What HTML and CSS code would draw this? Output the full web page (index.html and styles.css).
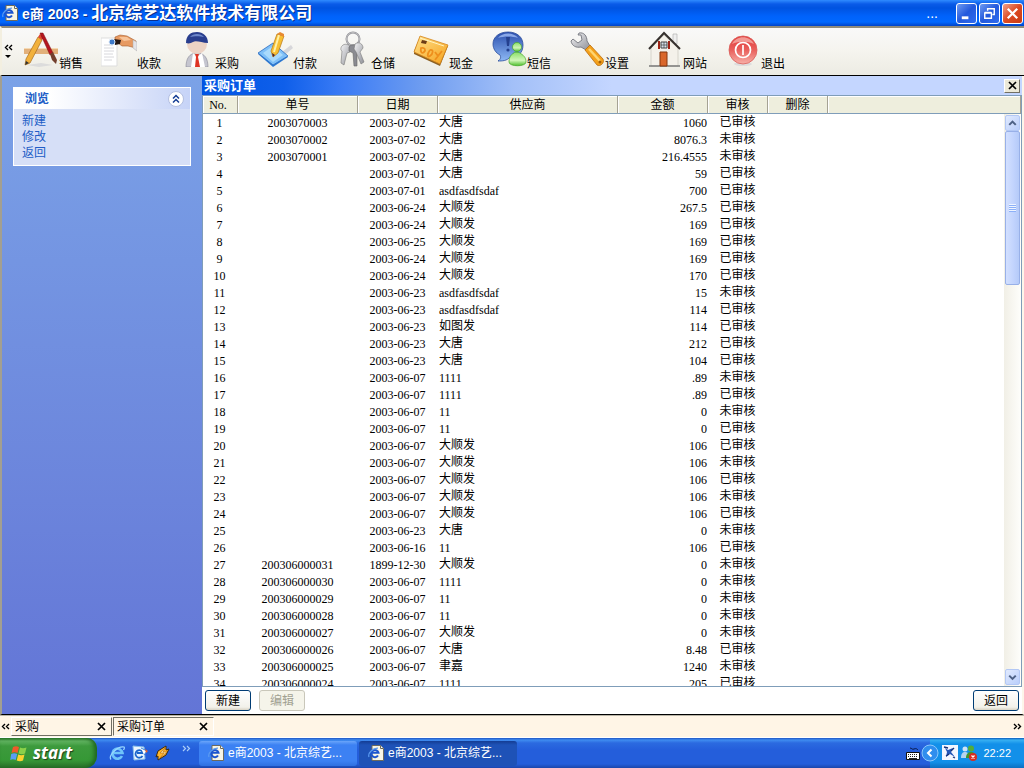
FILE: index.html
```html
<!DOCTYPE html>
<html lang="zh-CN">
<head>
<meta charset="utf-8">
<title>e商2003 - 北京综艺达软件技术有限公司</title>
<link rel="stylesheet" href="styles.css">
</head>
<body>
<svg class="defs" aria-hidden="true">
  <defs>
    <linearGradient id="blueG" x1="0" y1="0" x2="0" y2="1"><stop offset="0" stop-color="#2b4fae"/><stop offset="1" stop-color="#8db8f4"/></linearGradient>
    <linearGradient id="goldG" x1="0" y1="0" x2="1" y2="1"><stop offset="0" stop-color="#ffe08a"/><stop offset="1" stop-color="#f5a21c"/></linearGradient>
    <linearGradient id="redG" x1="0" y1="0" x2="0" y2="1"><stop offset="0" stop-color="#e23b3b"/><stop offset=".5" stop-color="#e9605c"/><stop offset="1" stop-color="#f7b0a8"/></linearGradient>
    <linearGradient id="greenG" x1="0" y1="0" x2="0" y2="1"><stop offset="0" stop-color="#8be06a"/><stop offset=".6" stop-color="#d0f5b8"/><stop offset="1" stop-color="#4dbf2c"/></linearGradient>
    <linearGradient id="greyG" x1="0" y1="0" x2="1" y2="1"><stop offset="0" stop-color="#f4f4f6"/><stop offset="1" stop-color="#8d8f96"/></linearGradient>
    <symbol id="page-e" viewBox="0 0 16 16">
      <path d="M4 .5h8.500l3 3V15.500H4z" fill="#f7f5e6" stroke="#6d6a5c"/>
      <path d="M12.500.5v3h3" fill="#fff" stroke="#6d6a5c"/>
      <path d="M10 10.500A3.600 3.600 0 1 1 10.500 7.800H4" fill="none" stroke="#1c55cf" stroke-width="2"/>
      <path d="M1 12C-.5 8 5 3 10 3.200" fill="none" stroke="#5b9bf0" stroke-width="1.200"/>
    </symbol>
  </defs>
</svg>
<div class="app">
  <header class="titlebar">
    <svg class="i16"><use href="#page-e"/></svg>
    <h1><span class="latin">e商 2003 - </span>北京综艺达软件技术有限公司</h1>
    <span class="dots">...</span>
    <button class="win" aria-label="最小化"><svg viewBox="0 0 20 20"><path d="M5 13h7v3H5z" fill="#fff"/></svg></button>
    <button class="win" aria-label="还原"><svg viewBox="0 0 20 20" fill="none" stroke="#fff"><path d="M5 9.500h7v5.500H5zM5 9h7" stroke-width="1.500"/><path d="M8 7V5h7v6h-2M8 5h7" stroke-width="1.500"/></svg></button>
    <button class="win close" aria-label="关闭"><svg viewBox="0 0 20 20"><path d="M5 5l10 10M15 5L5 15" stroke="#fff" stroke-width="2.400"/></svg></button>
  </header>

  <nav class="toolbar">
    <button class="more" aria-label="更多"><svg viewBox="0 0 9 16"><path d="M4 1L1.500 3.500 4 6M8 1L5.500 3.500 8 6" fill="none" stroke="#000" stroke-width="1.400"/><path d="M1 11h6L4 14z"/></svg></button>
    <button class="tool"><svg viewBox="0 0 36 36"><path d="M4 34l14-2 12 2-14 2z" fill="#dcdcdc"/><path d="M1 17h34v6H1z" fill="#e2b07a"/><path d="M1 17h34v1H1z" fill="#f4d9b4"/><path d="M15 6l4 3L7 32l-5 2 1-6z" fill="#f2b13c" stroke="#a86b1b" stroke-width=".7"/><path d="M15 6l2-3 4 3-2 3z" fill="#e04830"/><path d="M2 34l1-4 3 2z" fill="#333"/><path d="M17 2l3 0 10 20-3 2z" fill="#b5161f" stroke="#740d12" stroke-width=".5"/><path d="M27 23l3-2 4 8-1 4-4-4z" fill="#73402e"/></svg><span>销售</span></button>
    <button class="tool"><svg viewBox="0 0 36 36"><path d="M0 7h16v28H0z" fill="#fff" stroke="#ddd"/><path d="M3 14h9M3 17h10M3 20h10M3 23h9M3 26h10M3 29h8" stroke="#d8d8dc"/><path d="M14 6l5-2 7 1 9 5v7l-8-2-6 0-4-3-3-3z" fill="#e79a62" stroke="#a65c2e" stroke-width=".6"/><path d="M18 6l8 0 4 3-7 1z" fill="#f7c49a"/><path d="M32 9l4 2v9l-4-3z" fill="#e4e4e8" stroke="#aaa" stroke-width=".5"/><path d="M13 8l7 1-1 4-5 1z" fill="#251713"/><circle cx="11" cy="11" r="3" fill="#3c78c8" stroke="#dbe8f8"/></svg><span>收款</span></button>
    <button class="tool"><svg viewBox="0 0 36 36"><path d="M7 36c0-8 3-14 11-14s11 6 11 14z" fill="#c5c5cf" stroke="#888895" stroke-width=".6"/><path d="M14 22l4 4 5-4 3 14H12z" fill="#fff"/><path d="M16 23h4l-1 3 2 10h-5l1-10z" fill="#de3424"/><ellipse cx="18" cy="13" rx="10" ry="10" fill="#ecd3c5"/><path d="M7 12C7 4 12 1 18 1s11 4 11 11c-6 0-12-3-15-1-2 1-4 2-7 1z" fill="#293e8e"/><path d="M11 6c3-4 11-4 14 0-4-1-10-1-14 0z" fill="#6e87ca"/></svg><span>采购</span></button>
    <button class="tool"><svg viewBox="0 0 36 36"><path d="M21 24l13-10 2 3-14 12z" fill="#d7d7da"/><path d="M1 23l15-9 15 12-15 10z" fill="#2b79d4"/><path d="M1 22l15-10 15 13-15 9z" fill="#7fc0f8" stroke="#286bc0" stroke-width=".8"/><path d="M6 22l10-7 10 9-10 7z" fill="#a9dafc"/><path d="M20 3l7 2-6 17-5 4-2-6z" fill="#f7bf32" stroke="#b87512" stroke-width=".7"/><path d="M22 4l-5 17" stroke="#fff0a8" stroke-width="2"/><path d="M20 3l3-2 4 2 0 3z" fill="#e78a32"/><path d="M16 26l-1-4 3 2z" fill="#423"/></svg><span>付款</span></button>
    <button class="tool"><svg viewBox="0 0 36 36"><circle cx="18" cy="8" r="6.500" fill="none" stroke="#909096" stroke-width="2"/><circle cx="18" cy="8" r="6.500" fill="none" stroke="#ddd" stroke-width=".6"/><path d="M7 15c2-3 8-2 9 2l-1 4-3 1-3 12-3-2 1-12c-2-1-1-4 0-5z" fill="url(#greyG)" stroke="#777" stroke-width=".6"/><path d="M14 16c3-4 9-2 9 2l-1 4 0 13-3 0-1-13-4-2z" fill="#8a8b91" stroke="#666" stroke-width=".6"/><path d="M20 13c4-3 8 0 8 4l-3 4 4 10-3 2-5-12-2-3z" fill="url(#greyG)" stroke="#777" stroke-width=".6"/></svg><span>仓储</span></button>
    <button class="tool"><svg viewBox="0 0 36 36"><path d="M7 6l28 9-8 20-26-12 0-3z" fill="#8c6122"/><path d="M7 5l28 9-8 19L1 21z" fill="url(#goldG)" stroke="#d5851b" stroke-width=".8"/><path d="M9 9l5 1-1 3-5-1z" fill="#6b3b16"/><path d="M8 17c4-1 5 2 3 4s-4 0-3-4zM17 19c4-1 3 4 0 6s-3-2 0-6M22 21l3 4 4-5M25 25l-3 4" fill="none" stroke="#ee8f1c" stroke-width="1.800"/><path d="M7 7l24 8" stroke="#fff2c0"/></svg><span>现金</span></button>
    <button class="tool"><svg viewBox="0 0 36 36"><path d="M17 1c9 0 15 5 15 13s-5 12-13 12c-3 4-8 4-12 4 3-2 3-4 2-6-4-2-7-6-7-11C2 6 8 1 17 1z" fill="url(#blueG)" stroke="#2a4b9a" stroke-width=".8"/><path d="M7 7c4-6 16-6 20 0-6-2-14-2-20 0z" fill="#8aa8e8"/><path d="M15 6h4l-1 9h-2z" fill="#24408f"/><circle cx="17" cy="19" r="1.600" fill="#24408f"/><path d="M18 31c0-6 3-8 5-9-1-1 5-1 6 0 3 2 6 4 6 9 0 5-17 5-17 0z" fill="url(#greenG)" stroke="#45a52a" stroke-width=".7"/><circle cx="26" cy="16" r="4.500" fill="url(#greenG)" stroke="#45a52a" stroke-width=".7"/></svg><span>短信</span></button>
    <button class="tool"><svg viewBox="0 0 36 36"><path d="M10 2c5-1 8 3 8 8l3 5-4 4-5-3c-5 1-9-1-10-6l2-2 5 4 4-3-1-5-3 0z" fill="url(#greyG)" stroke="#73757d" stroke-width=".9"/><path d="M16 19l5-5 13 14c2 4-3 8-6 6z" fill="#f4a11b" stroke="#ba6b0a" stroke-width=".8"/><path d="M20 18l11 12" stroke="#ffd570" stroke-width="2.500"/><circle cx="31" cy="31" r="1.500" fill="#a65f08"/></svg><span>设置</span></button>
    <button class="tool"><svg viewBox="0 0 36 36"><path d="M26 3h4v10h-4z" fill="#eee" stroke="#aaa" stroke-width=".6"/><path d="M4 17L17 4l14 13v18H4z" fill="#f4f1ea" stroke="#c5c0b5" stroke-width=".6"/><path d="M2 18L17 2l16 16" fill="none" stroke="#35302d" stroke-width="2"/><path d="M2 35h31" stroke="#7a7a7a" stroke-width="1.500"/><path d="M13 21h7v14h-7z" fill="#d9662a" stroke="#84360f"/><path d="M14 11h6v6h-6z" fill="#d7e3ec" stroke="#444"/><path d="M17 11v6M14 14h6" stroke="#444" stroke-width=".7"/><path d="M11 10h2v8h-2zM21 10h2v8h-2z" fill="#9e2416"/></svg><span>网站</span></button>
    <button class="tool"><svg viewBox="0 0 36 36"><ellipse cx="18" cy="33" rx="9" ry="2" fill="#ddd"/><circle cx="18" cy="19" r="14" fill="url(#redG)" stroke="#d95f5b" stroke-width=".8"/><path d="M7 13c4-9 18-9 22 0-7-3-15-3-22 0z" fill="#f29a94"/><circle cx="18" cy="19" r="7.500" fill="none" stroke="#fff" stroke-width="1.700"/><path d="M18 14v10" stroke="#fff" stroke-width="1.700"/></svg><span>退出</span></button>
  </nav>

  <div class="work">
    <aside class="side">
      <section class="card">
        <h2>浏览<button class="fold" aria-label="收起"><svg viewBox="0 0 18 18"><circle cx="9" cy="9" r="7.500" fill="#fff" stroke="#b3bfe0"/><path d="M6 8.500L9 5.500l3 3M6 12.500L9 9.500l3 3" fill="none" stroke="#153d94" stroke-width="1.500"/></svg></button></h2>
        <ul><li><a href="#new">新建</a></li><li><a href="#edit">修改</a></li><li><a href="#back">返回</a></li></ul>
      </section>
    </aside>
    <main class="main">
      <div class="caption"><h2>采购订单</h2><button class="x" aria-label="关闭采购订单"><svg viewBox="0 0 9 9"><path d="M1 1l7 7M8 1L1 8" stroke="#000" stroke-width="1.700"/></svg></button></div>
      <div class="list">
        <table>
          <colgroup><col class="c-no"><col class="c-id"><col class="c-date"><col class="c-vendor"><col class="c-sum"><col class="c-flag"><col class="c-flag"><col></colgroup>
          <thead><tr><th>No.</th><th>单号</th><th>日期</th><th>供应商</th><th>金额</th><th>审核</th><th>删除</th><th></th></tr></thead>
          <tbody>
            <tr><td>1</td><td>2003070003</td><td>2003-07-02</td><td class="cn">大唐</td><td>1060</td><td class="cn">已审核</td></tr>
            <tr><td>2</td><td>2003070002</td><td>2003-07-02</td><td class="cn">大唐</td><td>8076.3</td><td class="cn">未审核</td></tr>
            <tr><td>3</td><td>2003070001</td><td>2003-07-02</td><td class="cn">大唐</td><td>216.4555</td><td class="cn">未审核</td></tr>
            <tr><td>4</td><td></td><td>2003-07-01</td><td class="cn">大唐</td><td>59</td><td class="cn">已审核</td></tr>
            <tr><td>5</td><td></td><td>2003-07-01</td><td>asdfasdfsdaf</td><td>700</td><td class="cn">已审核</td></tr>
            <tr><td>6</td><td></td><td>2003-06-24</td><td class="cn">大顺发</td><td>267.5</td><td class="cn">已审核</td></tr>
            <tr><td>7</td><td></td><td>2003-06-24</td><td class="cn">大顺发</td><td>169</td><td class="cn">已审核</td></tr>
            <tr><td>8</td><td></td><td>2003-06-25</td><td class="cn">大顺发</td><td>169</td><td class="cn">已审核</td></tr>
            <tr><td>9</td><td></td><td>2003-06-24</td><td class="cn">大顺发</td><td>169</td><td class="cn">已审核</td></tr>
            <tr><td>10</td><td></td><td>2003-06-24</td><td class="cn">大顺发</td><td>170</td><td class="cn">已审核</td></tr>
            <tr><td>11</td><td></td><td>2003-06-23</td><td>asdfasdfsdaf</td><td>15</td><td class="cn">未审核</td></tr>
            <tr><td>12</td><td></td><td>2003-06-23</td><td>asdfasdfsdaf</td><td>114</td><td class="cn">已审核</td></tr>
            <tr><td>13</td><td></td><td>2003-06-23</td><td class="cn">如图发</td><td>114</td><td class="cn">已审核</td></tr>
            <tr><td>14</td><td></td><td>2003-06-23</td><td class="cn">大唐</td><td>212</td><td class="cn">已审核</td></tr>
            <tr><td>15</td><td></td><td>2003-06-23</td><td class="cn">大唐</td><td>104</td><td class="cn">已审核</td></tr>
            <tr><td>16</td><td></td><td>2003-06-07</td><td>1111</td><td>.89</td><td class="cn">未审核</td></tr>
            <tr><td>17</td><td></td><td>2003-06-07</td><td>1111</td><td>.89</td><td class="cn">已审核</td></tr>
            <tr><td>18</td><td></td><td>2003-06-07</td><td>11</td><td>0</td><td class="cn">未审核</td></tr>
            <tr><td>19</td><td></td><td>2003-06-07</td><td>11</td><td>0</td><td class="cn">已审核</td></tr>
            <tr><td>20</td><td></td><td>2003-06-07</td><td class="cn">大顺发</td><td>106</td><td class="cn">已审核</td></tr>
            <tr><td>21</td><td></td><td>2003-06-07</td><td class="cn">大顺发</td><td>106</td><td class="cn">未审核</td></tr>
            <tr><td>22</td><td></td><td>2003-06-07</td><td class="cn">大顺发</td><td>106</td><td class="cn">已审核</td></tr>
            <tr><td>23</td><td></td><td>2003-06-07</td><td class="cn">大顺发</td><td>106</td><td class="cn">未审核</td></tr>
            <tr><td>24</td><td></td><td>2003-06-07</td><td class="cn">大顺发</td><td>106</td><td class="cn">已审核</td></tr>
            <tr><td>25</td><td></td><td>2003-06-23</td><td class="cn">大唐</td><td>0</td><td class="cn">未审核</td></tr>
            <tr><td>26</td><td></td><td>2003-06-16</td><td>11</td><td>106</td><td class="cn">已审核</td></tr>
            <tr><td>27</td><td>200306000031</td><td>1899-12-30</td><td class="cn">大顺发</td><td>0</td><td class="cn">未审核</td></tr>
            <tr><td>28</td><td>200306000030</td><td>2003-06-07</td><td>1111</td><td>0</td><td class="cn">未审核</td></tr>
            <tr><td>29</td><td>200306000029</td><td>2003-06-07</td><td>11</td><td>0</td><td class="cn">未审核</td></tr>
            <tr><td>30</td><td>200306000028</td><td>2003-06-07</td><td>11</td><td>0</td><td class="cn">未审核</td></tr>
            <tr><td>31</td><td>200306000027</td><td>2003-06-07</td><td class="cn">大顺发</td><td>0</td><td class="cn">未审核</td></tr>
            <tr><td>32</td><td>200306000026</td><td>2003-06-07</td><td class="cn">大唐</td><td>8.48</td><td class="cn">已审核</td></tr>
            <tr><td>33</td><td>200306000025</td><td>2003-06-07</td><td class="cn">聿嘉</td><td>1240</td><td class="cn">未审核</td></tr>
            <tr><td>34</td><td>200306000024</td><td>2003-06-07</td><td>1111</td><td>205</td><td class="cn">已审核</td></tr>
          </tbody>
        </table>
        <div class="scroll">
          <button class="arrow" aria-label="向上"><svg viewBox="0 0 14 14"><path d="M3.500 9L7 5.500 10.500 9" fill="none" stroke="#4d6185" stroke-width="2.200"/></svg></button>
          <div class="thumb"><i></i></div>
          <button class="arrow" aria-label="向下"><svg viewBox="0 0 14 14"><path d="M3.500 5.500L7 9l3.500-3.500" fill="none" stroke="#4d6185" stroke-width="2.200"/></svg></button>
        </div>
      </div>
      <div class="actions"><button class="btn">新建</button><button class="btn" disabled>编辑</button><button class="btn last">返回</button></div>
    </main>
  </div>

  <div class="tabs">
    <button class="chev" aria-label="向左"><svg viewBox="0 0 9 7"><path d="M4 1L1.500 3.500 4 6M8 1L5.500 3.500 8 6" fill="none" stroke="#000" stroke-width="1.400"/></svg></button>
    <div class="tab"><a href="#buy">采购</a><button aria-label="关闭采购"><svg viewBox="0 0 9 9"><path d="M1 1l7 7M8 1L1 8" stroke="#000" stroke-width="1.700"/></svg></button></div>
    <div class="tab current"><a href="#order">采购订单</a><button aria-label="关闭采购订单"><svg viewBox="0 0 9 9"><path d="M1 1l7 7M8 1L1 8" stroke="#000" stroke-width="1.700"/></svg></button></div>
    <button class="chev end" aria-label="向右"><svg viewBox="0 0 9 7"><path d="M1 1l2.500 2.500L1 6M5 1l2.500 2.500L5 6" fill="none" stroke="#000" stroke-width="1.400"/></svg></button>
  </div>

  <footer class="taskbar">
    <button class="start"><svg viewBox="0 0 18 17"><path d="M3 2c2-1 4-1 6 0L7.500 8c-2-1-4-1-6 0z" fill="#f0592b"/><path d="M10 2.500c2 1 4 1 6.500 0L15 8.500c-2 1-4 1-6.500 0z" fill="#8bd04a"/><path d="M1.200 9c2-1 4-1 6 0l-1.500 6c-2-1-4-1-5.500 0z" fill="#5a9df5"/><path d="M8.200 9.500c2 1 4 1 6.300 0l-1.500 6c-2 1-4 1-6.300 0z" fill="#fbd22f"/></svg><span>start</span></button>
    <div class="quick">
      <a href="#ie" aria-label="Internet Explorer"><svg viewBox="0 0 16 16"><path d="M13 11A5 5 0 1 1 13.500 8H4" fill="none" stroke="#6fc4fa" stroke-width="2.600"/><path d="M2 14.500C-1 11 8 1 15 2c1 1 0 2-.5 3" fill="none" stroke="#9bd8ff" stroke-width="1.200"/></svg></a>
      <a href="#mail" aria-label="Outlook Express"><svg viewBox="0 0 16 16"><path d="M1 1l11 1 1 12-11 1z" fill="#e9f5ff" stroke="#8bc0ea"/><path d="M10.500 11A3.800 3.800 0 1 1 11 8H5" fill="none" stroke="#1a66cc" stroke-width="1.800"/><path d="M9 3l6 3-3 4" fill="#fff" stroke="#3a83d8"/><path d="M13 4l3 2-2 2z" fill="#e0622a"/></svg></a>
      <a href="#amp" aria-label="Winamp"><svg viewBox="0 0 16 16"><path d="M11 1L3 6l-2 6 2-1 0 4 8-5 3-6-3 1z" fill="#ffb52a" stroke="#3d2a10"/><path d="M10 3L5 8h4l-4 5 7-6H8z" fill="#ffe9a0" stroke="#b86a10" stroke-width=".6"/></svg></a>
      <svg class="qmore" viewBox="0 0 9 7"><path d="M1 1l2.500 2.500L1 6M5 1l2.500 2.500L5 6" fill="none" stroke="#a9cdf8" stroke-width="1.200"/></svg>
    </div>
    <button class="task"><svg class="i16"><use href="#page-e"/></svg><span>e商2003 - 北京综艺...</span></button>
    <button class="task active"><svg class="i16"><use href="#page-e"/></svg><span>e商2003 - 北京综艺...</span></button>
    <svg class="kbd" viewBox="0 0 14 13"><path d="M4 1c2 0 2 2 4 1s3 0 4 1" fill="none" stroke="#0a1c4c"/><path d="M.5 5.500h13v7H.5z" fill="#fff" stroke="#111"/><path d="M2 7.500h10M2 9.500h10" stroke="#222" stroke-dasharray="1 1"/><path d="M3 11.500h8" stroke="#222"/></svg>
    <div class="tray">
      <button class="expand" aria-label="显示图标"><svg viewBox="0 0 18 18"><circle cx="9" cy="9" r="8" fill="#2f8eee" stroke="#8cc8fb"/><path d="M10.500 5.500L7 9l3.500 3.500" fill="none" stroke="#fff" stroke-width="2"/></svg></button>
      <svg class="i16" viewBox="0 0 16 16"><path d="M0 0h16v15H0z" fill="#f3f6ff"/><path d="M3 3l3 2 5-2-2 4 4 5-5-3-4 3 1-5z" fill="#2456b8"/><path d="M2 2l4 1M12 3l-3 3M11 12l2 1M4 11l3-2" stroke="#16337a" stroke-width="1.300"/></svg>
      <svg class="i16" viewBox="0 0 16 16"><circle cx="4" cy="4" r="2.500" fill="#cfe4f7"/><path d="M0 13c0-5 2-6 4-6s4 1 4 6z" fill="#b6d3ee"/><circle cx="10" cy="3.500" r="3" fill="#52ad39"/><path d="M5 13c0-5 3-6 5-6s5 1 5 6z" fill="#41962d"/><circle cx="12" cy="12" r="4" fill="#d92c20"/><path d="M10.500 10.500l3 3M13.500 10.500l-3 3" stroke="#fff" stroke-width="1.300"/></svg>
      <time>22:22</time>
    </div>
  </footer>
</div>
</body>
</html>
```
FILE: styles.css
```css
* { box-sizing: border-box; }
body {
  margin: 0;
  font: 12px/16px "Liberation Sans", "Noto Sans CJK SC", sans-serif;
  color: #000;
}
button { margin: 0; padding: 0; border: 0; background: none; font: inherit; color: inherit; }
a { color: inherit; text-decoration: none; }
h1, h2, ul { margin: 0; padding: 0; font: inherit; list-style: none; }
svg { display: block; flex: none; }
.defs { position: absolute; width: 0; height: 0; }
.i16 { width: 16px; height: 16px; }
.app { display: flex; flex-direction: column; height: 100vh; overflow: hidden; }

/* window title */
.titlebar {
  display: flex;
  align-items: center;
  flex: none;
  height: 26px;
  padding: 0 1px 0 2px;
  gap: 2px;
  color: #fff;
  background: linear-gradient(#2f8bff 0, #0a5be8 4px, #0053e0 8px, #0062fb 16px, #0068ff 22px, #0043c8 26px);
}
.titlebar h1 { flex: 1; margin-left: 2px; padding-top: 2px; font-size: 17px; font-weight: bold; line-height: 24px; white-space: nowrap; text-shadow: 1px 1px #0a2f8c; }
.latin { font-size: 14px; }
.dots { margin-right: 16px; font-size: 14px; }
.win { width: 21px; height: 21px; border: 1px solid #fff; border-radius: 3px; background: linear-gradient(135deg, #6f9bf2, #2359dc 50%, #2f6cf0); }
.win svg { width: 19px; height: 19px; }
.win.close { background: linear-gradient(135deg, #f0a08a, #dc4a22 50%, #c83c14); }

/* toolbar */
.toolbar {
  display: flex;
  flex: none;
  gap: 18px;
  height: 50px;
  padding: 3px 0 4px 2px;
  border-top: 2px solid #8f8b7c;
  border-bottom: 1px solid #000;
  background: linear-gradient(#f9f9f9, #f5f4ee 50%, #ecebe3);
  border-left: 2px solid #f3efe0;
}
.more { width: 9px; margin-right: -8px; padding-top: 13px; align-self: flex-start; }
.more svg { width: 9px; height: 16px; }
.tool { display: flex; align-items: flex-end; width: 60px; flex: none; }
.tool svg { width: 36px; height: 36px; align-self: flex-start; }
.tool span { white-space: nowrap; line-height: 14px; }

/* work area */
.work { display: flex; flex: 1; min-height: 0; border: 2px solid #a39f90; border-width: 0 2px 1px; border-right-color: #fdf6ea; border-bottom-color: #000; }
.side { flex: none; width: 200px; padding: 11px 11px 0; background: linear-gradient(#7ba2e7, #6375d6); }
.card { border: 1px solid #fff; background: #d6dff7; color: #215dc6; }
.card h2 { display: flex; align-items: center; justify-content: space-between; height: 21px; padding: 0 5px 0 11px; font-weight: bold; background: linear-gradient(90deg, #fff 20%, #c6d3f7); }
.fold, .fold svg { width: 18px; height: 18px; }
.card ul { padding: 4px 8px; line-height: 16px; }
.main { display: flex; flex-direction: column; flex: 1; min-width: 0; background: #fff; }
.caption { display: flex; align-items: center; justify-content: space-between; flex: none; height: 19px; padding: 0 2px; background: linear-gradient(90deg, #0054e3 0, #0f5fea 10%, #3a7bf5 17%, #6f9df0 27%, #a3c0f8 38%, #c4d6ff 50%); color: #fff; }
.caption h2 { font-size: 13px; font-weight: bold; }
.x { display: grid; place-items: center; width: 16px; height: 14px; background: #ece9d8; border: 1px solid; border-color: #fff #716f64 #716f64 #fff; }
.x svg { width: 9px; height: 9px; }

.list { position: relative; flex: 1; min-height: 0; overflow: hidden; border: 1px solid #7f9db9; }
table { width: 100%; table-layout: fixed; border-collapse: separate; border-spacing: 0; }
.c-no { width: 35px; }
.c-id { width: 120px; }
.c-date { width: 80px; }
.c-vendor { width: 180px; }
.c-sum { width: 90px; }
.c-flag { width: 60px; }
th { height: 18px; padding: 0; line-height: 16px; font-weight: normal; background: #eeeedd; border-right: 1px solid #a5a294; border-bottom: 1px solid #7f9db9; box-shadow: inset 1px 1px #fff; }
th:first-child { font-family: "Liberation Serif", serif; padding-right: 4px; }
td { height: 17px; padding: 2px 1px 0 0; line-height: 15px; text-align: center; vertical-align: top; white-space: nowrap; font-family: "Liberation Serif", "Noto Sans CJK SC", serif; }
td.cn { padding: 1px 1px 1px 0; }
td:first-child { padding-right: 2px; }
td:nth-child(4) { padding-left: 1px; text-align: left; }
td:nth-child(5) { text-align: right; }

.scroll { position: absolute; top: 18px; right: 0; bottom: 0; width: 17px; display: flex; flex-direction: column; padding: 1px; background: linear-gradient(90deg, #f1efe6, #fefefb); }
.arrow { flex: none; width: 15px; height: 16px; border: 1px solid #b3c8f5; border-radius: 2px; background: linear-gradient(135deg, #e1eafe, #b9cefb); }
.arrow svg { width: 13px; height: 14px; }
.arrow:last-child { margin-top: auto; }
.thumb { display: grid; place-items: center; flex: none; width: 15px; height: 154px; border: 1px solid #98b0e8; border-radius: 2px; background: linear-gradient(90deg, #d3e0ff, #c1d3fd 60%, #b5caf8); }
.thumb i { width: 7px; height: 8px; background: repeating-linear-gradient(#eef4ff 0 1px, #8cb0f8 1px 2px); }

.actions { display: flex; align-items: center; gap: 8px; flex: none; height: 27px; padding: 0 3px; }
.btn { width: 46px; height: 21px; border: 1px solid #003c74; border-radius: 3px; background: linear-gradient(#fff, #f2f1ea 85%, #d8d3c4); line-height: 18px; }
.btn:disabled { color: #a1a192; border-color: #c9c7ba; background: #f5f4ea; }
.btn.last { margin-left: auto; }

/* open documents */
.tabs { display: flex; align-items: center; flex: none; height: 23px; padding: 0 1px; border-top: 1px solid #b8b4a6; border-bottom: 1px solid #fff; background: #fff5e6; }
.chev { width: 10px; }
.chev svg { width: 9px; height: 7px; }
.chev.end { margin-left: auto; }
.tab { display: flex; align-items: center; justify-content: space-between; width: 101px; height: 19px; margin-right: 1px; padding: 0 5px 0 3px; border: 1px solid; border-color: #fff #716f64 #716f64 #fff; white-space: nowrap; }
.tab.current { border-color: #716f64 #fff #fff #716f64; }
.tab svg { width: 9px; height: 9px; }

/* taskbar */
.taskbar { display: flex; align-items: center; flex: none; height: 30px; color: #fff; background: linear-gradient(#1f55c4 0, #3f8cf0 2px, #2b6ae0 5px, #245edb 12px, #245edb 26px, #1b46ab 30px); }
.start { display: flex; align-items: center; gap: 5px; width: 97px; height: 30px; padding-left: 10px; border-radius: 0 10px 12px 0; background: linear-gradient(#2f7d2f 0, #62b562 3px, #3d9a3d 8px, #369836 22px, #2a702a 30px); box-shadow: inset -3px 0 4px #1f661f; font: italic bold 17px/26px "Open Sans", sans-serif; text-shadow: 1px 1px 1px #1c3f1c; }
.start svg { width: 18px; height: 17px; }
.quick { display: flex; align-items: center; gap: 7px; width: 102px; padding-left: 12px; }
.quick a svg { width: 16px; height: 16px; }
.qmore { width: 9px; height: 7px; margin: 0 0 10px 4px; }
.task { display: flex; align-items: center; gap: 4px; width: 158px; height: 25px; margin-right: 2px; padding-left: 9px; border-radius: 3px; background: linear-gradient(#6aa5fa, #3c81f3 4px, #3c81f3 20px, #3070e0); white-space: nowrap; }
.task.active { background: linear-gradient(#143c93, #1e52b7 4px, #1e52b7); }
.kbd { width: 14px; height: 13px; margin: 0 10px 0 auto; }
.tray { display: flex; align-items: center; gap: 3px; height: 30px; padding-right: 13px; background: linear-gradient(#0c59b9 0, #37b0f2 2px, #1290e9 6px, #1290e9 24px, #0d6fc0 30px); }
.expand { width: 18px; height: 18px; margin-left: -9px; }
.expand svg { width: 18px; height: 18px; }
.tray time { margin-left: 3px; font-size: 11px; }
```
